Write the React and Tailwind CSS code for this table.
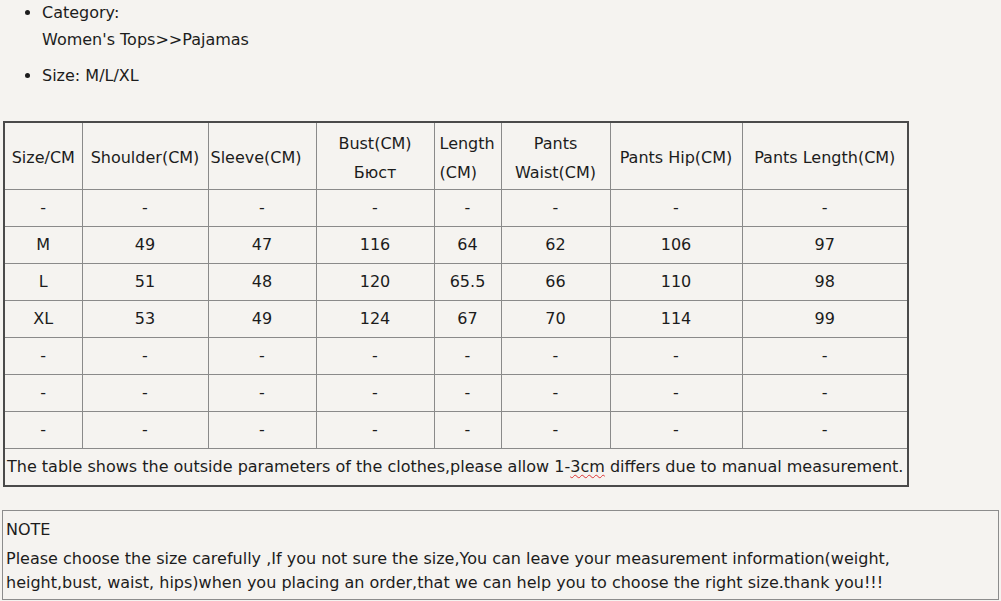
const rows = [
  ['-', '-', '-', '-', '-', '-', '-', '-'],
  ['M', '49', '47', '116', '64', '62', '106', '97'],
  ['L', '51', '48', '120', '65.5', '66', '110', '98'],
  ['XL', '53', '49', '124', '67', '70', '114', '99'],
  ['-', '-', '-', '-', '-', '-', '-', '-'],
  ['-', '-', '-', '-', '-', '-', '-', '-'],
  ['-', '-', '-', '-', '-', '-', '-', '-'],
];

const widths = ['w-[78px]', 'w-[126px]', 'w-[108px]', 'w-[118px]', 'w-[67px]', 'w-[109px]', 'w-[132px]', 'w-[166px]'];

export default function App() {
  return (
    <div className="min-h-[601px] w-[1001px] overflow-hidden bg-[#f5f3f0] text-[16px] text-[#1c1c1c] font-['DejaVu_Sans',sans-serif]">
      <ul className="list-disc pl-[42px] -mt-px">
        <li className="leading-[27px]">
          Category:
          <br />
          Women's Tops&gt;&gt;Pajamas
        </li>
        <li className="mt-[9px] leading-[27px]">Size: M/L/XL</li>
      </ul>

      <table className="ml-[3px] mt-[32px] w-[905px] table-fixed border-collapse border-2 border-[#4a4a4a]">
        <colgroup>
          {widths.map((w, i) => (
            <col key={i} className={w} />
          ))}
        </colgroup>
        <tbody>
          <tr className="h-[67px] [&>td]:pt-[4px]">
            <td className="border border-[#8a8a8a] text-center">Size/CM</td>
            <td className="border border-[#8a8a8a] text-center">Shoulder(CM)</td>
            <td className="border border-[#8a8a8a] text-left pl-[2px]">Sleeve(CM)</td>
            <td className="border border-[#8a8a8a] text-center leading-[29px]">
              Bust(CM)
              <br />
              Бюст
            </td>
            <td className="border border-[#8a8a8a] text-left pl-[5px] leading-[29px]">
              Length
              <br />
              (CM)
            </td>
            <td className="border border-[#8a8a8a] text-center leading-[29px]">
              Pants
              <br />
              Waist(CM)
            </td>
            <td className="border border-[#8a8a8a] text-center">Pants Hip(CM)</td>
            <td className="border border-[#8a8a8a] text-center">Pants Length(CM)</td>
          </tr>
          {rows.map((r, i) => (
            <tr key={i} className="h-[37px]">
              {r.map((c, j) => (
                <td key={j} className="border border-[#8a8a8a] text-center">
                  {c}
                </td>
              ))}
            </tr>
          ))}
          <tr className="h-[38px]">
            <td colSpan={8} className="border border-[#8a8a8a] pl-[2px] whitespace-nowrap">
              The table shows the outside parameters of the clothes,please allow 1-
              <span className="underline decoration-wavy decoration-[#d33] decoration-1 underline-offset-2">3cm</span>
              {' '}differs due to manual measurement.
            </td>
          </tr>
        </tbody>
      </table>

      <div className="ml-[2px] mt-[23px] w-[997px] border border-[#8c8c8c] pl-[3px] pt-[6px] pb-[4px]">
        <div className="leading-[26px]">NOTE</div>
        <div className="leading-[24px] mt-[4px]">
          Please choose the size carefully ,If you not sure the size,You can leave your measurement information(weight,
          <br />
          height,bust, waist, hips)when you placing an order,that we can help you to choose the right size.thank you!!!
        </div>
      </div>
    </div>
  );
}
